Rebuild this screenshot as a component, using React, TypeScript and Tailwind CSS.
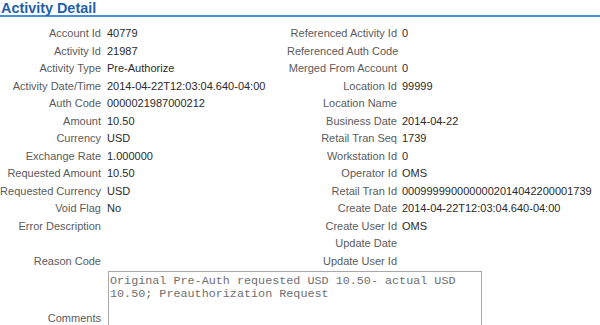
import React from "react";

type Field = { label: string; value?: string };

const left: (Field | null)[] = [
  { label: "Account Id", value: "40779" },
  { label: "Activity Id", value: "21987" },
  { label: "Activity Type", value: "Pre-Authorize" },
  { label: "Activity Date/Time", value: "2014-04-22T12:03:04.640-04:00" },
  { label: "Auth Code", value: "0000021987000212" },
  { label: "Amount", value: "10.50" },
  { label: "Currency", value: "USD" },
  { label: "Exchange Rate", value: "1.000000" },
  { label: "Requested Amount", value: "10.50" },
  { label: "Requested Currency", value: "USD" },
  { label: "Void Flag", value: "No" },
  { label: "Error Description" },
  null,
  { label: "Reason Code" },
];

const right: Field[] = [
  { label: "Referenced Activity Id", value: "0" },
  { label: "Referenced Auth Code" },
  { label: "Merged From Account", value: "0" },
  { label: "Location Id", value: "99999" },
  { label: "Location Name" },
  { label: "Business Date", value: "2014-04-22" },
  { label: "Retail Tran Seq", value: "1739" },
  { label: "Workstation Id", value: "0" },
  { label: "Operator Id", value: "OMS" },
  { label: "Retail Tran Id", value: "0009999900000002014042200001739" },
  { label: "Create Date", value: "2014-04-22T12:03:04.640-04:00" },
  { label: "Create User Id", value: "OMS" },
  { label: "Update Date" },
  { label: "Update User Id" },
];

const labelCls = "text-right text-[#5b5b5b] whitespace-nowrap";
const valueCls = "text-[#2a2a2a] whitespace-nowrap";

export default function App() {
  return (
    <div className="w-[600px] h-[325px] overflow-hidden bg-white font-['Liberation_Sans',Arial,sans-serif] text-[11px]">
      <div className="border-b-2 border-[#4a8fd6] h-[17px]">
        <h1 className="pl-[1px] text-[14.4px] font-bold leading-[16px] text-[#1f5faa]">Activity Detail</h1>
      </div>

      <div className="mt-[8px] grid grid-cols-[101px_186px_110px_1fr] auto-rows-[17.5px] items-center leading-[17.5px]">
        {right.map((r, i) => {
          const l = left[i];
          return (
            <React.Fragment key={r.label}>
              <div className={labelCls}>{l?.label ?? ""}</div>
              <div className={`pl-[6px] ${valueCls}`}>{l?.value ?? ""}</div>
              <div className={labelCls}>{r.label}</div>
              <div className={`pl-[5px] ${valueCls}`}>{r.value ?? ""}</div>
            </React.Fragment>
          );
        })}
      </div>

      <div className="grid grid-cols-[101px_1fr] items-end">
        <div className={`${labelCls} leading-[17.5px] pb-[1px]`}>Comments</div>
        <div className="pl-[7px] pt-[0.5px]">
          <textarea
            readOnly
            defaultValue="Original Pre-Auth requested USD 10.50- actual USD 10.50; Preauthorization Request"
            className="block w-[374px] h-[58px] resize-none border border-[#a9a9a9] bg-white pl-[1px] pr-[2px] py-[3px] font-['Liberation_Mono','Courier_New',monospace] text-[11.75px] leading-[13px] text-[#6f6f6f] outline-none"
          />
        </div>
      </div>
    </div>
  );
}
